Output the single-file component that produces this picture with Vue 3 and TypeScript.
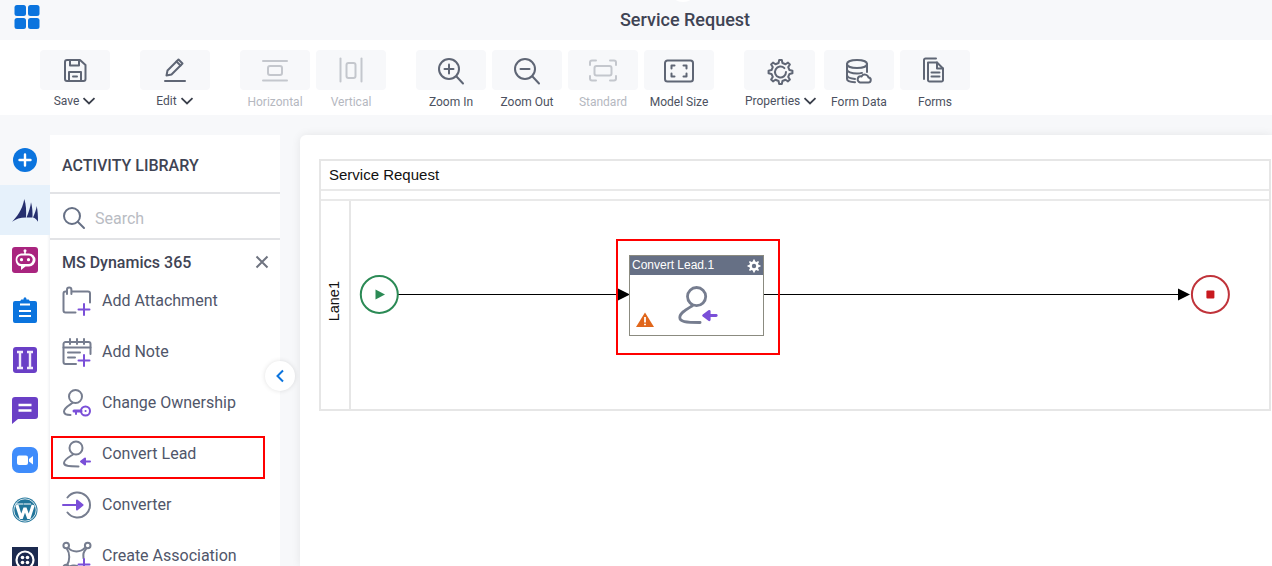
<script setup lang="ts">
interface Stroke { d: string; c?: string; fill?: boolean; w?: number }
interface Tool { label: string; icon: Stroke[]; chevron?: boolean; disabled?: boolean; wide?: boolean }
interface Group { tools: Tool[] }

function gear(cx: number, cy: number, ro: number, ri: number, teeth: number): string {
  const step = (Math.PI * 2) / teeth
  let d = ''
  for (let i = 0; i < teeth; i++) {
    const a = i * step - Math.PI / 2
    const pts: [number, number][] = [
      [a - step * 0.27, ri],
      [a - step * 0.14, ro],
      [a + step * 0.14, ro],
      [a + step * 0.27, ri],
    ]
    for (const [ang, r] of pts) {
      const x = (cx + Math.cos(ang) * r).toFixed(2)
      const y = (cy + Math.sin(ang) * r).toFixed(2)
      d += (d ? 'L' : 'M') + x + ' ' + y
    }
  }
  return d + 'Z'
}

const groups: Group[] = [
  { tools: [{ label: 'Save', chevron: true, icon: [
    { d: 'M7 5h13l5.5 5v14a2 2 0 0 1-2 2H7a2 2 0 0 1-2-2V7a2 2 0 0 1 2-2z' },
    { d: 'M10 5v5.5h9V5' }, { d: 'M9 26v-9h12v9' }, { d: 'M13 21.5h4' },
  ] }] },
  { tools: [{ label: 'Edit', chevron: true, icon: [
    { d: 'M6.5 20.5l1-5L18.5 4.5l4 4L11.5 19.5z' }, { d: 'M16.5 6.5l4 4' }, { d: 'M5 26h20' },
  ] }] },
  { tools: [
    { label: 'Horizontal', disabled: true, icon: [
      { d: 'M3 6h24' }, { d: 'M3 25.5h24' }, { d: 'M10 11h10a2 2 0 0 1 2 2v5a2 2 0 0 1-2 2H10a2 2 0 0 1-2-2v-5a2 2 0 0 1 2-2z' },
    ] },
    { label: 'Vertical', disabled: true, icon: [
      { d: 'M4.5 3.5v23' }, { d: 'M25.5 3.5v23' }, { d: 'M12.5 8h5a2 2 0 0 1 2 2v11a2 2 0 0 1-2 2h-5a2 2 0 0 1-2-2V10a2 2 0 0 1 2-2z' },
    ] },
  ] },
  { tools: [
    { label: 'Zoom In', icon: [
      { d: 'M23 14a10 10 0 1 1-20 0a10 10 0 1 1 20 0z' }, { d: 'M20.5 21.5L27 28.5' }, { d: 'M13 9.5v9' }, { d: 'M8.5 14h9' },
    ] },
    { label: 'Zoom Out', icon: [
      { d: 'M23 14a10 10 0 1 1-20 0a10 10 0 1 1 20 0z' }, { d: 'M20.5 21.5L27 28.5' }, { d: 'M8.5 14h9' },
    ] },
    { label: 'Standard', disabled: true, icon: [
      { d: 'M8 5.5H4a2 2 0 0 0-2 2V10' }, { d: 'M22 5.5h4a2 2 0 0 1 2 2V10' }, { d: 'M8 25.5H4a2 2 0 0 1-2-2V21' }, { d: 'M22 25.5h4a2 2 0 0 0 2-2V21' },
      { d: 'M8.5 11h13a2 2 0 0 1 2 2v5.5a2 2 0 0 1-2 2h-13a2 2 0 0 1-2-2V13a2 2 0 0 1 2-2z' },
    ] },
    { label: 'Model Size', icon: [
      { d: 'M3.5 5.5h23a2.5 2.5 0 0 1 2.5 2.5v16a2.5 2.5 0 0 1-2.5 2.5h-23A2.5 2.5 0 0 1 1 24V8a2.5 2.5 0 0 1 2.5-2.5z' },
      { d: 'M7.5 13.5V10.5h3' }, { d: 'M19.5 10.5h3v3' }, { d: 'M7.5 18.5v3h3' }, { d: 'M22.5 18.5v3h-3' },
    ] },
  ] },
  { tools: [
    { label: 'Properties', chevron: true, wide: true, icon: [
      { d: gear(15.5, 17, 12, 9.2, 8) }, { d: 'M21 17a5.5 5.5 0 1 1-1.6-3.9' },
    ] },
    { label: 'Form Data', icon: [
      { d: 'M3 9c0-2.500 4.500-4 10-4s10 1.500 10 4s-4.500 4-10 4s-10-1.500-10-4z' },
      { d: 'M3 9v15c0 1.800 3.500 3 8 3.300' }, { d: 'M23 9v8' }, { d: 'M3 14.500c0 2.200 4.500 4 10 4c2 0 3.500-.2 5-.6' }, { d: 'M3 20c0 2.200 3.500 3.600 8 3.900' },
      { d: 'M16 27.500h8a2.500 2.500 0 0 0 .5-5a3.800 3.800 0 0 0-7-1a3 3 0 0 0-1.500 6z', fill: true },
    ] },
    { label: 'Forms', icon: [
      { d: 'M4 24V5a1.500 1.500 0 0 1 1.500-1.500H16' },
      { d: 'M8 7.500h9l6 6V25a1.500 1.500 0 0 1-1.500 1.500h-12A1.500 1.500 0 0 1 8 25z' },
      { d: 'M17 7.500V13.500h6' }, { d: 'M11.500 17.500h8' }, { d: 'M11.500 21.500h8' },
    ] },
  ] },
]

const P = '#7a4fd8'
const G = '#767d8f'
const person: Stroke[] = [
  { d: 'M20.500 9a6.500 6.500 0 1 1-13 0a6.500 6.500 0 1 1 13 0z' },
  { d: 'M11 15.500C7 18 2 20.500 2 24c0 3 4 3.500 14.500 3.500' },
]
const arrowLeft: Stroke[] = [
  { d: 'M28 22.500H20', c: P },
  { d: 'M23 19.500l-4 3l4 3z', c: P, fill: true },
]
const plus: Stroke[] = [
  { d: 'M22 18v11', c: P },
  { d: 'M16.500 23.500h11', c: P },
]

const items: { label: string; icon: Stroke[]; marked?: boolean }[] = [
  { label: 'Add Attachment', icon: [
    { d: 'M5 5.500H3.500a2 2 0 0 0-2 2v17a2 2 0 0 0 2 2h10' },
    { d: 'M10 5.500h16a2 2 0 0 1 2 2v9' },
    { d: 'M5 8V3.700a2.200 2.200 0 0 1 4.400 0V8' },
    ...plus,
  ] },
  { label: 'Add Note', icon: [
    { d: 'M14 27H3.500a2 2 0 0 1-2-2V7a2 2 0 0 1 2-2h23a2 2 0 0 1 2 2v10' },
    { d: 'M1.500 10.500h27' }, { d: 'M8 2v5' }, { d: 'M15 2v5' }, { d: 'M22 2v5' }, { d: 'M6 15.500h12' }, { d: 'M6 20.500h7' },
    ...plus,
  ] },
  { label: 'Change Ownership', icon: [
    { d: 'M20 8.500a6.500 6.500 0 1 1-13 0a6.500 6.500 0 1 1 13 0z' },
    { d: 'M10.500 15C7 17.500 2 20 2 23.500c0 3 3 3.500 6.500 3.500' },
    { d: 'M12 23h7', c: P, w: 3 },
    { d: 'M28 23a4.500 4.500 0 1 1-9 0a4.500 4.500 0 1 1 9 0z', c: P },
    { d: 'M23.500 23h.1', c: P },
    { d: 'M14 23.500v2.500', c: P },
  ] },
  { label: 'Convert Lead', marked: true, icon: [...person, ...arrowLeft] },
  { label: 'Converter', icon: [
    { d: 'M5.500 7.500A12.500 12.500 0 1 1 5.500 22.500' },
    { d: 'M1 15h16', c: P },
    { d: 'M15 10.500L20.500 15L15 19.500z', c: P, fill: true },
  ] },
  { label: 'Create Association', icon: [
    { d: 'M6.500 7C10 11.500 19 11.500 22.500 7' },
    { d: 'M5 8C8 12 8 20 5 24' },
    { d: 'M7 26c2-1.500 6-2 8-1' },
    { d: 'M24 8c-2.500 2.500-3 6-2.500 9' },
    { d: 'M7 4.500a2.800 2.800 0 1 1-5.600 0a2.800 2.800 0 1 1 5.600 0z' },
    { d: 'M28.500 4.500a2.800 2.800 0 1 1-5.600 0a2.800 2.800 0 1 1 5.600 0z' },
    { d: 'M7 26.500a2.800 2.800 0 1 1-5.600 0a2.800 2.800 0 1 1 5.600 0z' },
    ...plus,
  ] },
]

const nodeGear = gear(7, 7, 6.5, 4.8, 8)
</script>

<template>
  <div class="app">
    <header class="topbar">
      <svg class="grid-logo" width="26" height="24" viewBox="0 0 26 24" aria-hidden="true">
        <rect x="0.500" y="0" width="11.500" height="11" rx="2.500" />
        <rect x="14" y="0" width="11.500" height="11" rx="2.500" />
        <rect x="0.500" y="13" width="11.500" height="11" rx="2.500" />
        <rect x="14" y="13" width="11.500" height="11" rx="2.500" />
      </svg>
      <h1 class="title">Service Request</h1>
      <div class="notch"></div>
    </header>

    <nav class="toolbar">
      <div v-for="(g, i) in groups" :key="i" class="group">
        <div v-for="t in g.tools" :key="t.label" class="tool" :class="{ disabled: t.disabled, wide: t.wide }">
          <div class="tool-btn">
            <svg width="30" height="30" viewBox="0 0 30 30" fill="none" stroke-linecap="round" stroke-linejoin="round" aria-hidden="true">
              <path v-for="(s, k) in t.icon" :key="k" :d="s.d" :fill="s.fill ? '#fff' : 'none'" />
            </svg>
          </div>
          <div class="tool-label" :class="{ drop: t.chevron }">
            <span>{{ t.label }}</span>
            <svg v-if="t.chevron" width="14" height="8" viewBox="0 0 14 8" fill="none" aria-hidden="true">
              <path d="M1.500 1.200L7 6.500l5.500-5.300" stroke="#3a3f4b" stroke-width="1.800" />
            </svg>
          </div>
        </div>
      </div>
    </nav>

    <main class="main">
      <aside class="rail">
        <div class="rail-item">
          <svg width="26" height="26" viewBox="0 0 26 26"><circle cx="13" cy="13" r="12" fill="#0b74de" /><path d="M13 7.500v11M7.500 13h11" stroke="#fff" stroke-width="2.400" stroke-linecap="round" /></svg>
        </div>
        <div class="rail-item active">
          <svg width="28" height="26" viewBox="0 0 28 26"><path fill="#262f6e" d="M1 24.700C5.500 20.500 11.500 12.500 13.300 2C15.200 8 15.400 14 15 20.500C9 20.500 5 22 1 24.700zM15.500 20.500C17.800 15 19.500 10 20 5.300C21.300 10 21.700 15 21.500 20.500zM22 20.500C24 16 25.300 12 25.700 9C26.800 14 27 19 27 24.700C25.700 22.500 24 21 22 20.500z" /></svg>
        </div>
        <div class="rail-item">
          <svg width="26" height="26" viewBox="0 0 26 26"><rect width="26" height="26" rx="3" fill="#a9247f" /><circle cx="13" cy="3.800" r="1.500" fill="#fff" /><rect x="12.200" y="4" width="1.600" height="3" fill="#fff" /><path fill="#fff" d="M9 6.500h8a6.500 6.500 0 0 1 0 13h-3.500L9 23v-3.700A6.500 6.500 0 0 1 9 6.500z" /><rect x="5.300" y="8.500" width="15.400" height="8.500" rx="4.200" fill="#a9247f" /><circle cx="9.500" cy="12.700" r="1.600" fill="#fff" /><circle cx="16.500" cy="12.700" r="1.600" fill="#fff" /></svg>
        </div>
        <div class="rail-item">
          <svg width="24" height="26" viewBox="0 0 24 26"><path fill="#0b74de" d="M2 4h5.500c0-1 .5-1.500 1.500-1.500h1.500c0-3 3-3 3 0H15c1 0 1.500.5 1.500 1.500H22a2 2 0 0 1 2 2v18a2 2 0 0 1-2 2H2a2 2 0 0 1-2-2V6a2 2 0 0 1 2-2z" /><path d="M6 14h12M6 19h12M7 7.500h10" stroke="#fff" stroke-width="2" /></svg>
        </div>
        <div class="rail-item">
          <svg width="24" height="26" viewBox="0 0 24 26"><rect width="24" height="26" rx="3" fill="#6a3fc6" /><path d="M4 5h6M7 5v16M4 21h6M14 5h6M17 5v16M14 21h6" stroke="#f2ecfb" stroke-width="2.400" /></svg>
        </div>
        <div class="rail-item">
          <svg width="26" height="27" viewBox="0 0 26 27"><path fill="#6a3fc6" d="M3 0h20a3 3 0 0 1 3 3v16a3 3 0 0 1-3 3H6l-6 5V3a3 3 0 0 1 3-3z" /><path d="M6.500 8h13M6.500 13.500h13" stroke="#fff" stroke-width="2.400" /></svg>
        </div>
        <div class="rail-item">
          <svg width="26" height="26" viewBox="0 0 26 26"><rect width="26" height="26" rx="7" fill="#3f8cfb" /><rect x="5" y="8.500" width="11" height="9.500" rx="2" fill="#fff" /><path fill="#fff" d="M17 12l4-3v8.500l-4-3z" /></svg>
        </div>
        <div class="rail-item">
          <svg width="26" height="26" viewBox="0 0 26 26"><circle cx="13" cy="13" r="12.500" fill="#21759b" /><circle cx="13" cy="13" r="11.200" fill="none" stroke="#fff" stroke-width="0.800" /><path d="M4.800 8L9.200 21.500L13 11L16.800 21.500L21.200 8" fill="none" stroke="#fff" stroke-width="3.200" stroke-linejoin="bevel" /><path d="M3.500 7h7.500M11.500 7h7.500" stroke="#fff" stroke-width="1.200" /></svg>
        </div>
        <div class="rail-item">
          <svg width="26" height="26" viewBox="0 0 26 26"><rect width="26" height="26" fill="#1c2a4f" /><circle cx="13" cy="13" r="8.500" fill="none" stroke="#fff" stroke-width="2.200" /><circle cx="10.500" cy="10.500" r="1.800" fill="#fff" /><circle cx="15.500" cy="10.500" r="1.800" fill="#fff" /><circle cx="10.500" cy="15.500" r="1.800" fill="#fff" /><circle cx="15.500" cy="15.500" r="1.800" fill="#fff" /></svg>
        </div>
      </aside>

      <section class="library">
        <h2 class="lib-title">ACTIVITY LIBRARY</h2>
        <div class="lib-search">
          <svg width="24" height="24" viewBox="0 0 24 24" fill="none" stroke="#667085" stroke-width="2" stroke-linecap="round" aria-hidden="true">
            <circle cx="10" cy="10" r="8" /><path d="M16 16l6 6" />
          </svg>
          <span>Search</span>
        </div>
        <div class="lib-head">
          <span>MS Dynamics 365</span>
          <svg width="14" height="14" viewBox="0 0 14 14" stroke="#6f7480" stroke-width="2" aria-hidden="true"><path d="M1.500 1.500l11 11M12.500 1.500l-11 11" /></svg>
        </div>
        <ul class="lib-list">
          <li v-for="it in items" :key="it.label" class="lib-item">
            <svg width="30" height="30" viewBox="0 0 30 30" fill="none" stroke-width="2" stroke-linecap="round" stroke-linejoin="round" aria-hidden="true">
              <path v-for="(s, k) in it.icon" :key="k" :d="s.d" :stroke="s.c || G" :stroke-width="s.w || 2" :fill="s.fill ? (s.c || 'none') : 'none'" />
            </svg>
            <span>{{ it.label }}</span>
            <div v-if="it.marked" class="mark"></div>
          </li>
        </ul>
        <button class="collapse" aria-label="Collapse">
          <svg width="10" height="14" viewBox="0 0 10 14" fill="none" stroke="#0b74de" stroke-width="2" aria-hidden="true"><path d="M8 1.500L2.500 7L8 12.500" /></svg>
        </button>
      </section>

      <section class="canvas">
        <div class="pool">
          <div class="pool-title">Service Request</div>
          <div class="pool-gap"></div>
          <div class="lane">
            <div class="lane-label"><span>Lane1</span></div>
            <div class="lane-body">
              <svg class="wires" width="920" height="210" viewBox="0 0 920 210" aria-hidden="true">
                <path d="M47 93.500H268M412 93.500H828" stroke="#000" stroke-width="1" fill="none" />
                <path d="M267 87.500L279 93.500L267 99.500z" fill="#000" />
                <path d="M827 87.500L839 93.500L827 99.500z" fill="#000" />
                <circle cx="28.300" cy="93.500" r="18.500" fill="#fff" stroke="#2b8a55" stroke-width="2" />
                <path d="M24.500 88.500L34 93.500L24.500 98.500z" fill="#2b8a55" />
                <circle cx="859.400" cy="93.500" r="18.500" fill="#fff" stroke="#c0333a" stroke-width="2" />
                <rect x="855.400" y="89.500" width="8" height="8" rx="1" fill="#c8191f" />
              </svg>
              <div class="node">
                <div class="node-head">
                  <span>Convert Lead.1</span>
                  <svg width="14" height="14" viewBox="0 0 14 14" aria-hidden="true">
                    <path :d="nodeGear" fill="#fff" /><circle cx="7" cy="7" r="2.200" fill="#667085" />
                  </svg>
                </div>
                <svg class="node-icon" width="42" height="42" viewBox="0 0 30 30" fill="none" stroke-width="2" stroke-linecap="round" stroke-linejoin="round" aria-hidden="true">
                  <path d="M20.500 9a6.500 6.500 0 1 1-13 0a6.500 6.500 0 1 1 13 0z" :stroke="G" />
                  <path d="M11 15.500C7 18 2 20.500 2 24c0 3 4 3.500 14.500 3.500" :stroke="G" />
                  <path d="M28 22.500H19.500" :stroke="P" />
                  <path d="M23 19.500l-4 3l4 3z" :stroke="P" :fill="P" />
                </svg>
                <svg class="node-warn" width="18" height="15" viewBox="0 0 18 15" aria-hidden="true">
                  <path d="M9 .500L18 15H0z" fill="#e0661b" /><path d="M9 5v5.500M9 11.800v1.500" stroke="#fff" stroke-width="1.800" />
                </svg>
              </div>
              <div class="node-mark"></div>
            </div>
          </div>
        </div>
      </section>
    </main>
  </div>
</template>

<style>
html, body { margin: 0; background: #f7f8fa; overflow: hidden; }
</style>

<style scoped>
.app {
  height: 566px;
  overflow: hidden;
  display: flex;
  flex-direction: column;
  background: #f7f8fa;
  font-family: Roboto, "Liberation Sans", sans-serif;
  color: #444a5a;
}
.topbar {
  height: 40px;
  flex: none;
  position: relative;
  overflow: hidden;
  box-sizing: border-box;
  padding-left: 98px;
  display: flex;
  align-items: center;
  justify-content: center;
}
.grid-logo { position: absolute; left: 14px; top: 5px; fill: #0b74de; }
.notch {
  position: absolute;
  left: 668px;
  top: -28px;
  width: 30px;
  height: 30px;
  border-radius: 50%;
  background: #fff;
}
.title { margin: 0; font-size: 18px; font-weight: 500; color: #3f4454; line-height: 40px; }

.toolbar {
  height: 75px;
  flex: none;
  box-sizing: border-box;
  background: #fff;
  display: flex;
  gap: 30px;
  padding: 10px 0 0 40px;
}
.group { display: flex; gap: 6px; }
.tool { width: 70px; display: flex; flex-direction: column; align-items: center; }
.tool.wide { width: 74px; align-items: flex-start; }
.tool.wide .tool-btn { width: 71px; }
.tool.wide .tool-label { padding-left: 1px; }
.tool-btn {
  width: 70px;
  height: 40px;
  background: #f7f8fa;
  border-radius: 4px;
  display: flex;
  align-items: center;
  justify-content: center;
}
.tool-btn svg { stroke: #5f6675; stroke-width: 2; overflow: visible; }
.tool.disabled .tool-btn svg { stroke: #c4c7cd; }
.tool-label {
  font-size: 12px;
  line-height: 14px;
  margin-top: 5px;
  color: #4c5160;
  white-space: nowrap;
  display: flex;
  align-items: center;
  gap: 3px;
}
.tool-label.drop { margin-top: 4px; }
.tool.disabled .tool-label { color: #b5b8bf; }

.main { flex: 1; min-height: 0; display: flex; padding-top: 20px; }
.rail { width: 50px; flex: none; background: #fff; box-shadow: inset -3px 0 3px -2px #eceef1; }
.rail-item {
  height: 50px;
  display: flex;
  align-items: center;
  justify-content: center;
}
.rail-item:first-child { background: #f7f8fa; }
.rail-item.active { background: #e6f1fb; }

.library {
  width: 230px;
  flex: none;
  background: #fff;
  position: relative;
}
.lib-title {
  margin: 0;
  height: 59px;
  box-sizing: border-box;
  border-bottom: 2px solid #e2e3e6;
  padding: 21px 0 0 12px;
  font-size: 16px;
  line-height: 20px;
  font-weight: 500;
  color: #3f4454;
}
.lib-search {
  height: 46px;
  box-sizing: border-box;
  border-bottom: 2px solid #e2e3e6;
  display: flex;
  align-items: center;
  gap: 9px;
  padding: 4px 0 0 12px;
  font-size: 16px;
  color: #b9bcc3;
}
.lib-head {
  display: flex;
  justify-content: space-between;
  align-items: center;
  height: 35px;
  box-sizing: border-box;
  padding: 9px 11px 0 12px;
  font-size: 16px;
  font-weight: 500;
  color: #3f4454;
}
.lib-list { list-style: none; margin: 0; padding: 0; height: 291px; overflow: hidden; }
.lib-item {
  position: relative;
  height: 51px;
  display: flex;
  align-items: center;
  gap: 10px;
  padding-left: 12px;
  font-size: 16px;
  color: #50566a;
  white-space: nowrap;
}
.mark {
  position: absolute;
  left: 1px;
  top: 8px;
  width: 214px;
  height: 43px;
  box-sizing: border-box;
  border: 2px solid #f00;
}
.collapse {
  position: absolute;
  left: 215px;
  top: 226px;
  width: 30px;
  height: 30px;
  padding: 0;
  border: 0;
  border-radius: 50%;
  background: #fff;
  box-shadow: 0 0 5px rgba(0, 0, 0, 0.12);
  display: flex;
  align-items: center;
  justify-content: center;
  z-index: 2;
}

.canvas {
  flex: 1;
  margin-left: 20px;
  background: #fff;
  border-radius: 6px 0 0 0;
  box-shadow: 0 0 10px rgba(0, 0, 0, 0.08);
  padding: 24px 0 0 19px;
  font-family: "Liberation Sans", Arial, sans-serif;
  color: #111;
  min-width: 0;
}
.pool {
  width: 952px;
  height: 252px;
  box-sizing: border-box;
  border: 2px solid #e6e6e6;
  display: flex;
  flex-direction: column;
}
.pool-title {
  height: 28px;
  line-height: 28px;
  padding-left: 8px;
  font-size: 15px;
  flex: none;
}
.pool-gap { height: 8px; flex: none; border-top: 2px solid #e9e9e9; border-bottom: 2px solid #e9e9e9; }
.lane { flex: 1; display: flex; min-height: 0; }
.lane-label {
  width: 25px;
  flex: none;
  border-right: 2px solid #e6e6e6;
  display: flex;
  align-items: center;
  justify-content: center;
  padding: 0 3px 8px 0;
  font-size: 14.500px;
}
.lane-label span { writing-mode: vertical-rl; transform: rotate(180deg); }
.lane-body { flex: 1; position: relative; }
.wires { position: absolute; left: 0; top: 0; }
.node {
  position: absolute;
  left: 278px;
  top: 54px;
  width: 135px;
  height: 81px;
  box-sizing: border-box;
  border: 1px solid #8b8b80;
  background: #fff;
}
.node-head {
  height: 19px;
  background: #667085;
  color: #fff;
  font-size: 12px;
  line-height: 19px;
  padding: 0 2px;
  display: flex;
  align-items: center;
  justify-content: space-between;
}
.node-icon { position: absolute; left: 47px; top: 28px; }
.node-warn { position: absolute; left: 6px; top: 56px; }
.node-mark {
  position: absolute;
  left: 265px;
  top: 38px;
  width: 164px;
  height: 116px;
  box-sizing: border-box;
  border: 2px solid #f00;
}
</style>
